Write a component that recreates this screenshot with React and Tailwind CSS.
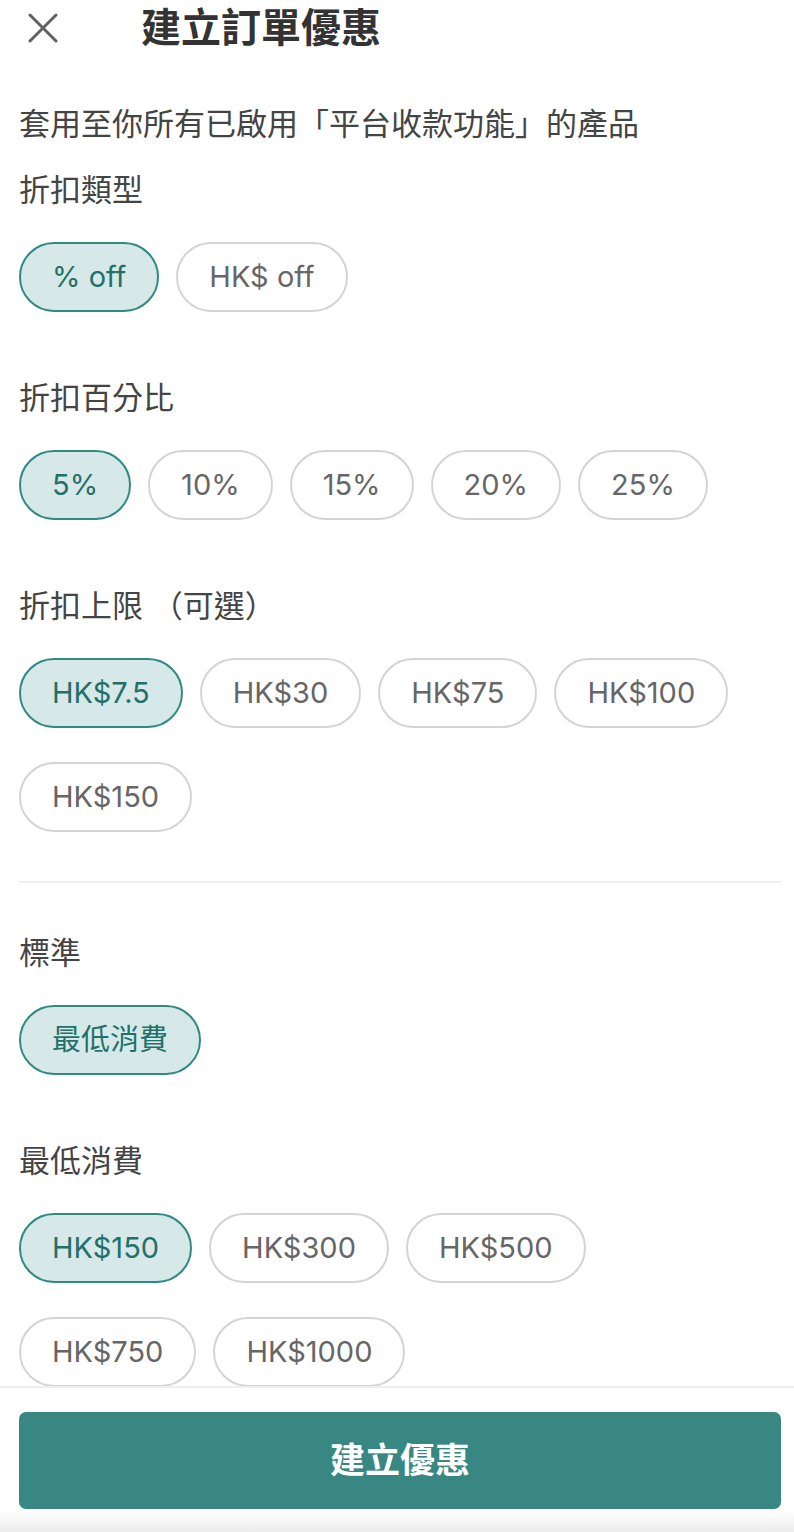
const font = { fontFamily: 'Inter, "Noto Sans CJK TC", sans-serif' }

function Chip({ label, active }) {
  return (
    <div
      className={`flex h-[70px] items-center justify-center rounded-full border-2 px-[31px] text-[29px] ${
        active ? 'border-[#2f8a84] bg-[#d6e9e8] text-[#23706a]' : 'border-[#d4d4d4] bg-white text-[#666666]'
      }`}
    >
      {label}
    </div>
  )
}

function Section({ title, options, active, last }) {
  return (
    <div className={last ? '' : 'mb-[66px]'}>
      <p className="text-[31px] leading-[40px] text-[#444444]">{title}</p>
      <div className="mt-[32px] flex flex-wrap gap-x-[17px] gap-y-[34px] pr-[6px]">
        {options.map((o) => (
          <Chip key={o} label={o} active={o === active} />
        ))}
      </div>
    </div>
  )
}

export default function App() {
  return (
    <div className="relative h-[1532px] w-[794px] overflow-hidden bg-white" style={font}>
      {/* Header */}
      <div className="flex h-[56px] items-center">
        <svg width="30" height="30" viewBox="0 0 30 30" className="ml-[28px] text-[#616161]">
          <path d="M2 2 L28 28 M28 2 L2 28" stroke="currentColor" strokeWidth="3" strokeLinecap="round" />
        </svg>
        <h1 className="ml-[83px] text-[40px] font-bold leading-[56px] text-[#333333]">建立訂單優惠</h1>
      </div>

      <div className="pl-[19px] pr-[13px]">
        <p className="mt-[48px] text-[31px] leading-[40px] text-[#444444]">套用至你所有已啟用「平台收款功能」的產品</p>
        <div className="mt-[26px]">
          <Section title="折扣類型" options={['% off', 'HK$ off']} active="% off" />
          <Section title="折扣百分比" options={['5%', '10%', '15%', '20%', '25%']} active="5%" />
          <Section
            title="折扣上限 （可選）"
            options={['HK$7.5', 'HK$30', 'HK$75', 'HK$100', 'HK$150']}
            active="HK$7.5"
            last
          />
        </div>

        <div className="mt-[49px] mb-[50px] h-[2px] bg-[#efefef]" />

        <Section title="標準" options={['最低消費']} active="最低消費" />
        <Section
          title="最低消費"
          options={['HK$150', 'HK$300', 'HK$500', 'HK$750', 'HK$1000']}
          active="HK$150"
          last
        />
      </div>

      {/* Bottom action bar */}
      <div className="absolute inset-x-0 bottom-0 h-[146px] border-t-2 border-[#eeeeee] bg-gradient-to-b from-white from-85% to-[#ececec] pl-[19px] pr-[13px] pt-[24px]">
        <button className="flex h-[97px] w-full items-center justify-center rounded-[7px] bg-[#388782] text-[35px] font-bold text-white">
          建立優惠
        </button>
      </div>
    </div>
  )
}
